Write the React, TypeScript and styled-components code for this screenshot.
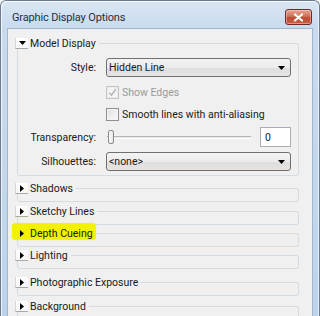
import React from "react";
import styled, { createGlobalStyle, css } from "styled-components";

const GlobalStyle = createGlobalStyle`
  html, body { margin: 0; padding: 0; overflow: hidden; background: #ffffff; }
  body { font-family: Roboto, "Liberation Sans", Arial, sans-serif; }
  * { box-sizing: border-box; }
`;

const Window = styled.div`
  width: 320px;
  height: 316px;
  display: flex;
  flex-direction: column;
  border: 1px solid #6a7b90;
  border-bottom: none;
  border-radius: 6px 6px 0 0;
  background: linear-gradient(180deg, #d9e6f3 0px, #c9dbee 26px, #bed3eb 100%);
  box-shadow: inset 1px 1px 0 rgba(255, 255, 255, 0.75), inset -1px 0 0 rgba(255, 255, 255, 0.6);
  padding: 0 6px;
  overflow: hidden;
`;

const TitleBar = styled.div`
  height: 27px;
  flex: none;
  display: flex;
  align-items: center;
  padding: 5px 1px 0 5px;
`;

const Title = styled.span`
  flex: 1;
  font-family: Roboto, "Liberation Sans", sans-serif;
  font-size: 11px;
  color: #1f2f43;
  letter-spacing: -0.15px;
`;

const CloseButton = styled.div`
  width: 27px;
  height: 16px;
  border: 1px solid #6e2a22;
  border-radius: 3px;
  background: linear-gradient(180deg, #e8a593 0%, #d0715c 45%, #be4a33 55%, #c95f45 100%);
  box-shadow: inset 0 0 0 1px rgba(255, 220, 210, 0.45);
  display: flex;
  align-items: center;
  justify-content: center;
`;

const Client = styled.div`
  flex: 1;
  background: #f0f0f0;
  border: 1px solid #a3b5ca;
  border-bottom: none;
  padding: 9px 13px 0 7px;
  display: flex;
  flex-direction: column;
  font-size: 10.5px;
  color: #1a1a1a;
`;

const Group = styled.div<{ $mt?: number }>`
  display: flex;
  flex-direction: column;
  margin-top: ${(p) => p.$mt ?? 0}px;
`;

const Header = styled.div`
  height: 11px;
  display: flex;
  align-items: flex-start;
`;

const Marker = styled.div<{ $hl?: boolean }>`
  height: 11px;
  display: flex;
  align-items: center;
  ${(p) =>
    p.$hl &&
    css`
      background: #f2f200;
      box-shadow: 0 -2px 1px 3px #f2f200;
      border-radius: 1px;
    `}
`;

const Expander = styled.div<{ $hl?: boolean }>`
  width: 13px;
  height: 11px;
  display: flex;
  align-items: center;
  justify-content: center;
  background: ${(p) => (p.$hl ? "transparent" : "linear-gradient(180deg, #ffffff, #f7f7f7)")};
  border-left: 1px solid ${(p) => (p.$hl ? "transparent" : "#d6d6d6")};
  border-bottom: 1px solid ${(p) => (p.$hl ? "transparent" : "#a9a9a9")};
`;

const HeaderTitle = styled.span`
  margin-left: 2px;
  line-height: 11px;
  white-space: nowrap;
  color: #1a1a1a;
`;

const Rule = styled.div`
  flex: 1;
  margin: 5px 0 0 3px;
  height: 6px;
  border-top: 1px solid #d3dce3;
  border-right: 1px solid #d3dce3;
  border-top-right-radius: 3px;
`;

const Body = styled.div<{ $collapsed?: boolean }>`
  margin-left: 2px;
  border: 1px solid #d3dce3;
  border-top: none;
  border-radius: 0 0 3px 3px;
  ${(p) =>
    p.$collapsed
      ? css`
          height: 8px;
        `
      : css`
          padding: 9px 7px 4px 0;
          display: flex;
          flex-direction: column;
        `}
`;

const Row = styled.div<{ $mt?: number }>`
  display: grid;
  grid-template-columns: 78px 1fr;
  column-gap: 10px;
  align-items: center;
  margin-top: ${(p) => p.$mt ?? 0}px;
`;

const Label = styled.span`
  text-align: right;
  white-space: nowrap;
`;

const Select = styled.div`
  height: 19px;
  border: 1px solid #707070;
  border-radius: 3px;
  background: linear-gradient(180deg, #f3f3f3 0%, #ebebeb 50%, #dddddd 51%, #e5e5e5 100%);
  display: flex;
  align-items: center;
  padding: 0 5px 0 2px;
`;

const SelectText = styled.span`
  flex: 1;
  white-space: nowrap;
`;

const CheckRow = styled.label<{ $disabled?: boolean }>`
  display: flex;
  align-items: center;
  gap: 3px;
  height: 13px;
  color: ${(p) => (p.$disabled ? "#9a9a9a" : "#1a1a1a")};
`;

const CheckBox = styled.span<{ $disabled?: boolean }>`
  width: 13px;
  height: 13px;
  border: 1px solid ${(p) => (p.$disabled ? "#c4c4c4" : "#8e8f8f")};
  background: ${(p) => (p.$disabled ? "#f4f4f4" : "linear-gradient(135deg, #e0e0e0, #fbfbfb)")};
  box-shadow: inset 0 0 0 1px ${(p) => (p.$disabled ? "#ececec" : "#f4f4f4")};
  display: flex;
  align-items: center;
  justify-content: center;
`;

const SliderLine = styled.div`
  display: flex;
  align-items: center;
  gap: 8px;
`;

const Slider = styled.div`
  flex: 1;
  height: 14px;
  display: flex;
  align-items: center;
  padding-left: 2px;
  position: relative;
`;

const Track = styled.div`
  position: absolute;
  left: 1px;
  right: 1px;
  top: 6px;
  height: 3px;
  border-top: 1px solid #b6b6b6;
  border-bottom: 1px solid #ffffff;
  background: #e6e6e6;
`;

const Thumb = styled.div`
  position: relative;
  width: 6px;
  height: 14px;
  border: 1px solid #8b8b8b;
  border-radius: 2px;
  background: linear-gradient(90deg, #ffffff, #e4e4e4);
`;

const TextBox = styled.div`
  width: 31px;
  height: 20px;
  border: 1px solid #abadb3;
  border-top-color: #a5acb5;
  background: #ffffff;
  display: flex;
  align-items: center;
  padding-left: 4px;
`;

const Arrow = () => (
  <svg width="7" height="4" viewBox="0 0 7 4">
    <path d="M0 0h7L3.5 4z" fill="#000" />
  </svg>
);

const RightTri = () => (
  <svg width="4" height="7" viewBox="0 0 4 7">
    <path d="M0 0l4 3.5L0 7z" fill="#000" />
  </svg>
);

const DownTri = () => (
  <svg width="7" height="4" viewBox="0 0 7 4">
    <path d="M0 0h7L3.5 4z" fill="#000" />
  </svg>
);

const Check = ({ color }: { color: string }) => (
  <svg width="9" height="9" viewBox="0 0 9 9">
    <path d="M1.2 4.6l2.3 2.6L7.8 1.2" fill="none" stroke={color} strokeWidth="1.4" />
  </svg>
);

const CloseGlyph = () => (
  <svg width="11" height="9" viewBox="0 0 11 9">
    <path d="M2 1.5l7 6M9 1.5l-7 6" stroke="#ffffff" strokeWidth="2.2" strokeLinecap="round" />
  </svg>
);

type Section = { title: string; mt: number };

const collapsed: Section[] = [
  { title: "Shadows", mt: 7 },
  { title: "Sketchy Lines", mt: 4 },
  { title: "Depth Cueing", mt: 3 },
  { title: "Lighting", mt: 3 },
  { title: "Photographic Exposure", mt: 8 },
  { title: "Background", mt: 5 },
];

export default function App() {
  return (
    <>
      <GlobalStyle />
      <Window>
        <TitleBar>
          <Title>Graphic Display Options</Title>
          <CloseButton>
            <CloseGlyph />
          </CloseButton>
        </TitleBar>
        <Client>
          <Group>
            <Header>
              <Marker>
                <Expander>
                  <DownTri />
                </Expander>
                <HeaderTitle>Model Display</HeaderTitle>
              </Marker>
              <Rule />
            </Header>
            <Body>
              <Row>
                <Label>Style:</Label>
                <Select>
                  <SelectText>Hidden Line</SelectText>
                  <Arrow />
                </Select>
              </Row>
              <Row $mt={9}>
                <span />
                <CheckRow $disabled>
                  <CheckBox $disabled>
                    <Check color="#b0b0b0" />
                  </CheckBox>
                  Show Edges
                </CheckRow>
              </Row>
              <Row $mt={9}>
                <span />
                <CheckRow>
                  <CheckBox />
                  Smooth lines with anti-aliasing
                </CheckRow>
              </Row>
              <Row $mt={6}>
                <Label>Transparency:</Label>
                <SliderLine>
                  <Slider>
                    <Track />
                    <Thumb />
                  </Slider>
                  <TextBox>0</TextBox>
                </SliderLine>
              </Row>
              <Row $mt={5}>
                <Label>Silhouettes:</Label>
                <Select>
                  <SelectText>&lt;none&gt;</SelectText>
                  <Arrow />
                </Select>
              </Row>
            </Body>
          </Group>
          {collapsed.map((s) => {
            const hl = s.title === "Depth Cueing";
            return (
              <Group key={s.title} $mt={s.mt}>
                <Header>
                  <Marker $hl={hl}>
                    <Expander $hl={hl}>
                      <RightTri />
                    </Expander>
                    <HeaderTitle>{s.title}</HeaderTitle>
                  </Marker>
                  <Rule />
                </Header>
                <Body $collapsed />
              </Group>
            );
          })}
        </Client>
      </Window>
    </>
  );
}
